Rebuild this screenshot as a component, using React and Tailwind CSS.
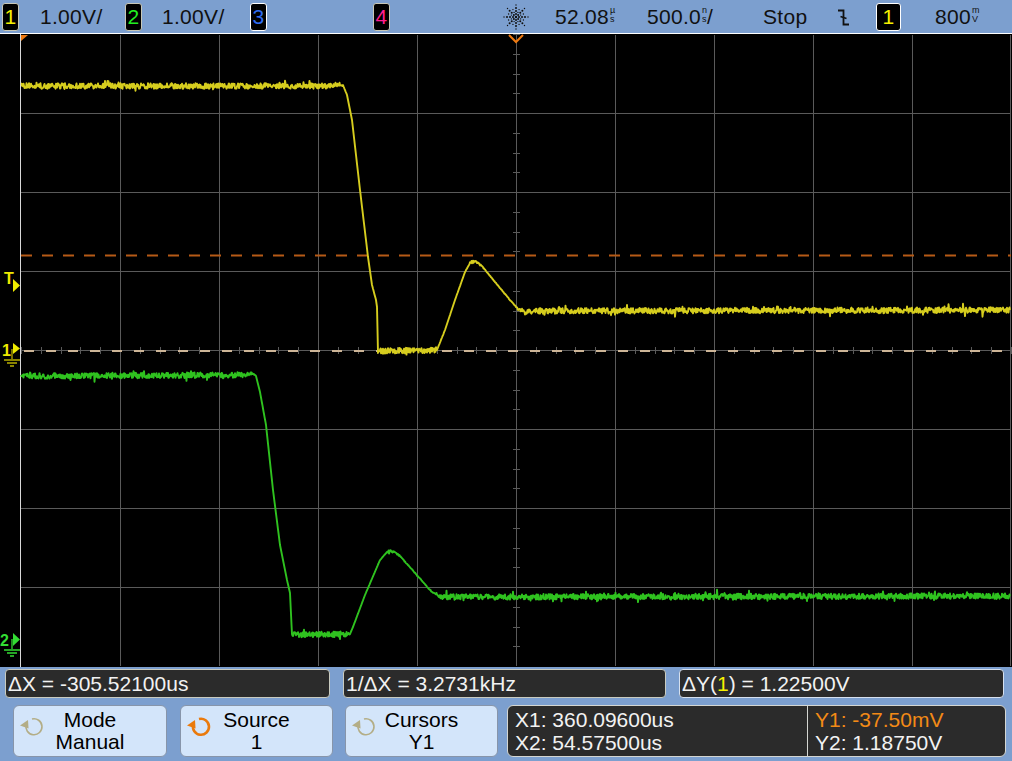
import React from 'react';

const FONT = { fontFamily: '"Liberation Sans", Arial, sans-serif' };

// small seeded random so the trace noise is the same on every render
function rng(seed) {
  let a = seed;
  return () => {
    a |= 0;
    a = (a + 0x6d2b79f5) | 0;
    let t = Math.imul(a ^ (a >>> 15), 1 | a);
    t = (t + Math.imul(t ^ (t >>> 7), 61 | t)) ^ t;
    return ((t ^ (t >>> 14)) >>> 0) / 4294967296;
  };
}

function tracePoints(keys, seed, amp) {
  const r = rng(seed);
  const pts = [];
  for (let i = 0; i < keys.length - 1; i++) {
    const [x0, y0] = keys[i];
    const [x1, y1] = keys[i + 1];
    const dx = x1 - x0;
    const dy = y1 - y0;
    const n = Math.max(1, Math.round(Math.abs(dx) * 2));
    const slope = Math.abs(dy) / Math.max(Math.abs(dx), 0.1);
    const a = amp / (1 + slope * slope * 6);
    for (let k = 0; k < n; k++) {
      const t = k / n;
      const spike = r() < 0.07 ? (r() - 0.5) * a * 3 : 0;
      const y = y0 + dy * t + (r() - 0.5) * 2 * a + spike;
      pts.push(`${(x0 + dx * t).toFixed(1)},${y.toFixed(1)}`);
    }
  }
  const last = keys[keys.length - 1];
  pts.push(`${last[0]},${last[1]}`);
  return pts.join(' ');
}

const yellowKeys = [
  [21, 86], [330, 86], [338, 84], [343, 85], [347, 95], [352, 120], [360, 190],
  [368, 257], [372, 285], [376, 300], [377, 307], [378, 352], [380, 351],
  [437, 350], [445, 330], [455, 300], [465, 272], [470, 263], [475, 261],
  [482, 266], [495, 282], [510, 300], [518, 309], [525, 311], [1010, 310],
];

const greenKeys = [
  [21, 376], [245, 375], [252, 373], [256, 376], [260, 392], [266, 425],
  [273, 490], [280, 545], [287, 580], [290, 593], [292, 635], [350, 634],
  [353, 627], [365, 595], [380, 560], [388, 551], [393, 551], [400, 556],
  [415, 573], [430, 590], [440, 597], [450, 597], [1010, 596],
];

const ChannelBox = ({ label, color, border = 'border-[#c8c8b8]', width = 'w-[17px]' }) => (
  <div className={`h-[28px] ${width} rounded-[3px] bg-black border ${border} flex items-center justify-center text-[21px] leading-none`} style={{ color }}>
    {label}
  </div>
);

const Stacked = ({ top, bottom }) => (
  <span className="inline-flex flex-col text-[9px] leading-[9px] ml-[1px] -mt-[3px] tracking-normal">
    <span>{top}</span>
    <span>{bottom}</span>
  </span>
);

const Spark = () => {
  const dots = [];
  for (let i = 0; i < 16; i++) {
    const ang = (i / 16) * Math.PI * 2;
    const radii = i % 2 === 0 ? [3, 6, 9, 12] : [5, 8];
    radii.forEach((rad) => {
      dots.push(
        <circle key={`${i}-${rad}`} cx={14 + Math.cos(ang) * rad} cy={14 + Math.sin(ang) * rad} r={i % 2 === 0 && rad < 10 ? 1 : 0.7} fill="#111" />
      );
    });
  }
  return (
    <svg width="28" height="28" viewBox="0 0 28 28">
      <circle cx="14" cy="14" r="1.2" fill="#111" />
      {dots}
    </svg>
  );
};

const TopBar = () => (
  <div className="h-[34px] bg-[#7c9fcf] border-b border-white flex items-center pl-[2px] text-[21px] text-[#111] tracking-[0.3px]" style={FONT}>
    <div className="w-[38px]"><ChannelBox label="1" color="#f5f000" /></div>
    <div className="w-[85px]">1.00V/</div>
    <div className="w-[37px]"><ChannelBox label="2" color="#22ee22" /></div>
    <div className="w-[88px]">1.00V/</div>
    <div className="w-[123px]"><ChannelBox label="3" color="#2f6cf0" border="border-white" /></div>
    <div className="w-[129px]"><ChannelBox label="4" color="#ff1f8f" /></div>
    <div className="w-[53px] flex items-center"><Spark /></div>
    <div className="w-[92px] flex items-center">52.08<Stacked top="µ" bottom="s" /></div>
    <div className="w-[116px] flex items-center">500.0<Stacked top="n" bottom="s" />/</div>
    <div className="w-[74px]">Stop</div>
    <div className="w-[39px] flex items-center">
      <svg width="13" height="20" viewBox="0 0 13 20">
        <path d="M1 3.5 H6.5 V17.5 H12" fill="none" stroke="#111" strokeWidth="1.8" />
        <path d="M3.5 9.5 L9.5 11.5" fill="none" stroke="#111" strokeWidth="1.6" />
      </svg>
    </div>
    <div className="w-[59px]"><ChannelBox label="1" color="#f5f000" border="border-white" width="w-[25px]" /></div>
    <div className="flex items-center">800<Stacked top="m" bottom="V" /></div>
  </div>
);

const Plot = () => {
  const hLines = [113, 192, 271, 350, 429, 508, 587];
  const vLines = [120, 219, 318, 417, 516, 615, 714, 813, 912];
  const vTicks = [];
  for (let y = 34; y < 666; y += 19.75) vTicks.push(Math.round(y));
  const hTicks = [];
  for (let x = 21; x < 1011; x += 19.8) hTicks.push(Math.round(x));
  return (
    <svg className="block" width="1012" height="633" viewBox="0 34 1012 633">
      <rect x="0" y="34" width="1012" height="633" fill="#000" />
      <g stroke="#5a5a5a" strokeWidth="1" shapeRendering="crispEdges">
        {hLines.map((y) => <line key={`h${y}`} x1="21" x2="1011" y1={y + 0.5} y2={y + 0.5} />)}
        {vLines.map((x) => <line key={`v${x}`} y1="35" y2="666" x1={x + 0.5} x2={x + 0.5} />)}
        <line x1="1010.5" x2="1010.5" y1="35" y2="666" />
        {vTicks.map((y) => <line key={`vt${y}`} x1="513" x2="520" y1={y + 0.5} y2={y + 0.5} />)}
        {hTicks.map((x) => <line key={`ht${x}`} y1="347" y2="354" x1={x + 0.5} x2={x + 0.5} />)}
      </g>
      <line x1="20.5" x2="20.5" y1="34" y2="667" stroke="#d8d8d8" strokeWidth="1" />

      {/* cursors */}
      <line x1="21" x2="1011" y1="255.5" y2="255.5" stroke="#b65a16" strokeWidth="2" strokeDasharray="11 10" />
      <line x1="24" x2="1011" y1="351" y2="351" stroke="#cdb597" strokeWidth="2" strokeDasharray="10 12" />

      {/* traces */}
      <polyline points={tracePoints(greenKeys, 7, 2.8)} fill="none" stroke="#2fc21f" strokeWidth="1.9" strokeLinejoin="round" />
      <polyline points={tracePoints(yellowKeys, 3, 2.8)} fill="none" stroke="#d6cd1e" strokeWidth="1.9" strokeLinejoin="round" />

      {/* top markers */}
      <polygon points="21,35 28,35 21,41" fill="#f07a10" />
      <polyline points="509,35 516,42 523,35" fill="none" stroke="#f07a10" strokeWidth="2" />

      {/* left markers */}
      <g fill="#eeea00" style={FONT} fontWeight="bold">
        <text x="4" y="284" fontSize="16">T</text>
        <polygon points="13,279 20,285.5 13,292" />
        <text x="2" y="356" fontSize="16">1</text>
        <polygon points="13,343 20,348.5 13,354" />
      </g>
      <g stroke="#b6ae00" strokeWidth="1.3" fill="none">
        <path d="M12 349 V359 M4 360 H20 M7 363 H17 M10 366 H14" />
      </g>
      <g fill="#33dd33" style={FONT} fontWeight="bold">
        <text x="0" y="646" fontSize="16">2</text>
        <polygon points="13,633 20,639.5 13,646" />
      </g>
      <g stroke="#33dd33" strokeWidth="1.3" fill="none">
        <path d="M12 639 V649 M4 650 H20 M7 653 H17 M10 656 H14" />
      </g>
    </svg>
  );
};

const KnobIcon = ({ color, width }) => (
  <svg width="28" height="24" viewBox="0 0 28 24">
    <path d="M15 4 A8 8 0 1 1 9.3 9.5" fill="none" stroke={color} strokeWidth={width} />
    <polygon points="3,10.5 11,5 11.5,13.5" fill={color} />
  </svg>
);

const SoftKey = ({ title, value, iconColor, iconWidth }) => (
  <div className="h-[52px] rounded-[6px] bg-[#d3e5fa] border border-[#8795aa] grid grid-cols-[34px_1fr_34px] items-center text-[21px] leading-[22px] text-black">
    <div className="pl-[3px] -mt-[8px]"><KnobIcon color={iconColor} width={iconWidth} /></div>
    <div className="flex flex-col items-center">
      <span>{title}</span>
      <span>{value}</span>
    </div>
    <div />
  </div>
);

const Readout = ({ className, children }) => (
  <div className={`h-[29px] rounded-[4px] bg-[#2b2b2b] border border-[#c9cbc0] flex items-center pl-[2px] text-[21px] text-[#f2f2f2] ${className}`}>
    {children}
  </div>
);

const BottomPanel = () => (
  <div className="h-[94px] bg-[#7c9fcf] pt-[2px]" style={FONT}>
    <div className="flex pl-[5px] gap-[13px]">
      <Readout className="w-[325px]">ΔX = -305.52100us</Readout>
      <Readout className="w-[323px]">1/ΔX = 3.2731kHz</Readout>
      <Readout className="w-[325px] border-[#d6e0ee]">
        ΔY(<span className="text-[#f5f000]">1</span> ) = 1.22500V
      </Readout>
    </div>
    <div className="flex pl-[13px] mt-[7px]">
      <div className="w-[154px]"><SoftKey title="Mode" value="Manual" iconColor="#b3ad86" iconWidth="1.6" /></div>
      <div className="w-[153px] ml-[13px]"><SoftKey title="Source" value="1" iconColor="#ea7a0c" iconWidth="2.6" /></div>
      <div className="w-[153px] ml-[12px]"><SoftKey title="Cursors" value="Y1" iconColor="#b3ad86" iconWidth="1.6" /></div>
      <div className="w-[499px] ml-[9px] h-[52px] rounded-[6px] bg-[#2b2b2b] border border-[#d4d6d2] flex text-[21px] leading-[23px]">
        <div className="w-[300px] border-r border-[#d4d6d2] pl-[7px] pt-[2px] text-[#f2f2f2] flex flex-col">
          <span>X1: 360.09600us</span>
          <span>X2: 54.57500us</span>
        </div>
        <div className="pl-[7px] pt-[2px] flex flex-col">
          <span className="text-[#f28a16]">Y1: -37.50mV</span>
          <span className="text-[#f2f2f2]">Y2: 1.18750V</span>
        </div>
      </div>
    </div>
  </div>
);

export default function App() {
  return (
    <div className="w-[1012px] h-[761px] bg-black overflow-hidden">
      <TopBar />
      <Plot />
      <BottomPanel />
    </div>
  );
}
